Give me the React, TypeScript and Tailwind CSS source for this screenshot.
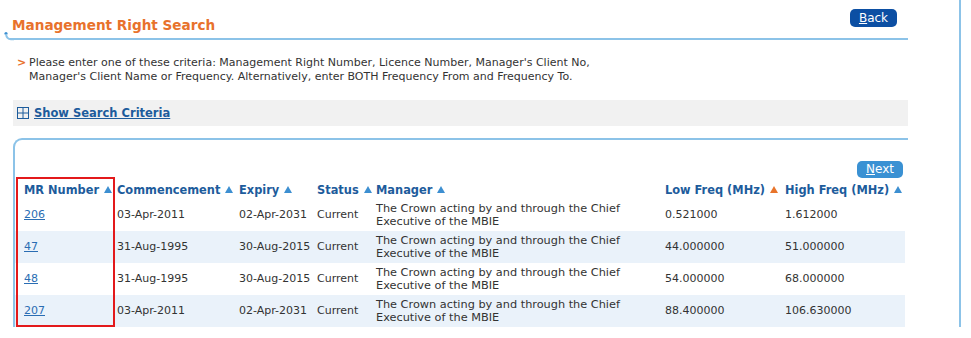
import React from 'react'

type Row = { mr: string, start: string, expiry: string, status: string, low: string, high: string }

const rows: Row[] = [
    { mr: "206", start: "03-Apr-2011", expiry: "02-Apr-2031", status: "Current", low: "0.521000", high: "1.612000" },
    { mr: "47", start: "31-Aug-1995", expiry: "30-Aug-2015", status: "Current", low: "44.000000", high: "51.000000" },
    { mr: "48", start: "31-Aug-1995", expiry: "30-Aug-2015", status: "Current", low: "54.000000", high: "68.000000" },
    { mr: "207", start: "03-Apr-2011", expiry: "02-Apr-2031", status: "Current", low: "88.400000", high: "106.630000" },
]

const Sort = ({ active }: { active?: boolean }) => (
    <svg width="8" height="7" viewBox="0 0 8 7" className="inline-block ml-[5px] mb-[2px]">
        <polygon points="4,0 8,7 0,7" fill={active ? "#e8742a" : "#3d8fd1"} />
    </svg>
)

const Head = ({ label, active }: { label: string, active?: boolean }) => (
    <span className="whitespace-nowrap">{label}<Sort active={active} /></span>
)

const App = () => {
    return (
        <div className="flex w-[971px] h-[338px] bg-white text-[#333] text-[11px] leading-[14px]" style={{ fontFamily: '"DejaVu Sans", Verdana, sans-serif' }}>
            <div className="w-[908px] shrink-0">
                {/* title bar */}
                <div className="relative h-[40px] ml-[10px] flex items-start justify-between border-b-2 border-[#8cc3e8]">
                    <svg width="10" height="10" viewBox="0 0 10 10" className="absolute left-[-6px] top-[31px]">
                        <circle cx="2" cy="2.5" r="1.6" fill="#3d8fd1" />
                        <path d="M2 3 Q2.5 8 7 8.2 L10 8.2" stroke="#8cc3e8" strokeWidth="2" fill="none" />
                    </svg>
                    <h1 className="ml-[2px] mt-[17px] text-[13.6px] leading-[17px] font-bold text-[#e8722c]">Management Right Search</h1>
                    <button className="mt-[9px] mr-[11px] h-[18px] w-[47px] rounded-[5px] bg-[#0c4fa3] text-white text-[12px] leading-[18px]">
                        <span className="underline">B</span>ack
                    </button>
                </div>

                {/* instructions */}
                <div className="mt-[16px] ml-[17px] flex">
                    <span className="text-[#e8722c] font-bold w-[12px]">&gt;</span>
                    <p>
                        Please enter one of these criteria: Management Right Number, Licence Number, Manager's Client No,<br />
                        Manager's Client Name or Frequency. Alternatively, enter BOTH Frequency From and Frequency To.
                    </p>
                </div>

                <div className="mt-[16px] ml-[13px] h-[26px] bg-[#f1f1f1] flex items-center pl-[4px]">
                    <svg width="12" height="12" viewBox="0 0 12 12" className="mr-[5px]">
                        <rect x="0.5" y="0.5" width="11" height="11" fill="none" stroke="#1d5c9c" strokeWidth="1" />
                        <line x1="6" y1="0.5" x2="6" y2="11.5" stroke="#1d5c9c" strokeWidth="1" />
                        <line x1="0.5" y1="6" x2="11.5" y2="6" stroke="#1d5c9c" strokeWidth="1" />
                    </svg>
                    <a href="#" className="font-bold text-[11.5px] text-[#1d5c9c] underline">Show Search Criteria</a>
                </div>

                {/* results panel */}
                <div className="relative mt-[12px] ml-[13px] h-[189px] border-t-2 border-l-2 border-[#8cc3e8] rounded-tl-[9px]">
                    <div className="flex justify-end pr-[5px] pt-[21px]">
                        <button className="h-[17px] w-[46px] rounded-[5px] bg-[#3a91d3] text-white text-[12px] leading-[17px]">
                            <span className="underline">N</span>ext
                        </button>
                    </div>
                    <table className="table-fixed border-collapse w-[890px] mt-[2px]">
                        <colgroup>
                            <col className="w-[102px]" />
                            <col className="w-[122px]" />
                            <col className="w-[78px]" />
                            <col className="w-[59px]" />
                            <col className="w-[289px]" />
                            <col className="w-[120px]" />
                            <col className="w-[120px]" />
                        </colgroup>
                        <thead>
                            <tr className="h-[19px] text-left font-bold text-[11.4px] text-[#1d5c9c]">
                                <th className="pl-[9px] p-0"><Head label="MR Number" /></th>
                                <th className="p-0"><Head label="Commencement" /></th>
                                <th className="p-0"><Head label="Expiry" /></th>
                                <th className="p-0"><Head label="Status" /></th>
                                <th className="p-0"><Head label="Manager" /></th>
                                <th className="p-0"><Head label="Low Freq (MHz)" active /></th>
                                <th className="p-0"><Head label="High Freq (MHz)" /></th>
                            </tr>
                        </thead>
                        <tbody>
                            {rows.map((r, i) => (
                                <tr key={r.mr} className={`h-[32px] ${i % 2 === 1 ? "bg-[#eaf2fa]" : "bg-white"}`}>
                                    <td className="pl-[9px]"><a href="#" className="text-[#2a6db3] underline">{r.mr}</a></td>
                                    <td>{r.start}</td>
                                    <td>{r.expiry}</td>
                                    <td>{r.status}</td>
                                    <td className="leading-[13px] text-[11.3px]">The Crown acting by and through the Chief<br />Executive of the MBIE</td>
                                    <td>{r.low}</td>
                                    <td>{r.high}</td>
                                </tr>
                            ))}
                        </tbody>
                    </table>
                    {/* highlight box */}
                    <div className="absolute left-[1px] top-[37px] w-[99px] h-[150px] border-2 border-[#e3191b]" />
                </div>
            </div>
            <div className="ml-[51px] w-[2px] h-[327px] bg-[#8cc3e8]" />
        </div>
    )
}

export default App
